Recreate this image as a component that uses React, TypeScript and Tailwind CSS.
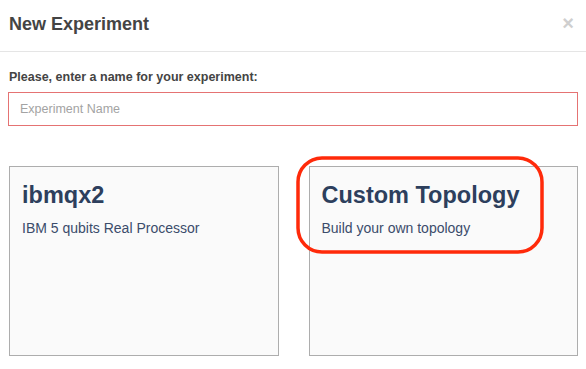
export default function App() {
  return (
    <div className="relative w-[586px] h-[369px] bg-white overflow-hidden font-['Liberation_Sans',Arial,sans-serif]">
      {/* Header */}
      <div className="h-[52px] border-b border-[#e5e5e5] px-2 pt-[12px] flex items-start justify-between">
        <h1 className="text-[18px] leading-6 font-bold text-[#444] pl-px">New Experiment</h1>
        <button className="h-5 text-[20px] leading-5 font-bold text-[#cfcfcf] mr-[4px] mt-[1px]" aria-label="Close">
          ×
        </button>
      </div>

      {/* Body */}
      <div className="px-2 pt-[15.5px]">
        <label className="block text-[12.5px] leading-[18px] font-bold text-[#444] pl-px">
          Please, enter a name for your experiment:
        </label>
        <input
          type="text"
          placeholder="Experiment Name"
          className="mt-[6.5px] block w-full h-[34px] border border-[#e57373] pl-[11px] text-[12.5px] text-[#444] placeholder:text-[#a3a3a3] outline-none"
        />

        <div className="mt-[40px] pl-px grid grid-cols-2 gap-[30px]">
          <Card title="ibmqx2" subtitle="IBM 5 qubits Real Processor" />
          <Card title="Custom Topology" subtitle="Build your own topology" />
        </div>
      </div>

      {/* Red hand-drawn annotation */}
      <svg className="absolute left-[294px] top-[154px]" width="254" height="102" viewBox="0 0 254 102" fill="none">
        <rect x="4" y="4" width="244" height="94" rx="24" stroke="#ff2a0a" strokeWidth="3.5" />
      </svg>
    </div>
  );
}

function Card({ title, subtitle }: { title: string; subtitle: string }) {
  return (
    <div className="h-[190px] bg-[#fafafa] border border-[#adadad] pl-[12px] pt-[15px]">
      <h2 className="text-[23.5px] leading-[26px] font-bold text-[#2d3f5d]">{title}</h2>
      <p className="mt-[10px] text-[14px] leading-5 text-[#3b4c6b]">{subtitle}</p>
    </div>
  );
}
